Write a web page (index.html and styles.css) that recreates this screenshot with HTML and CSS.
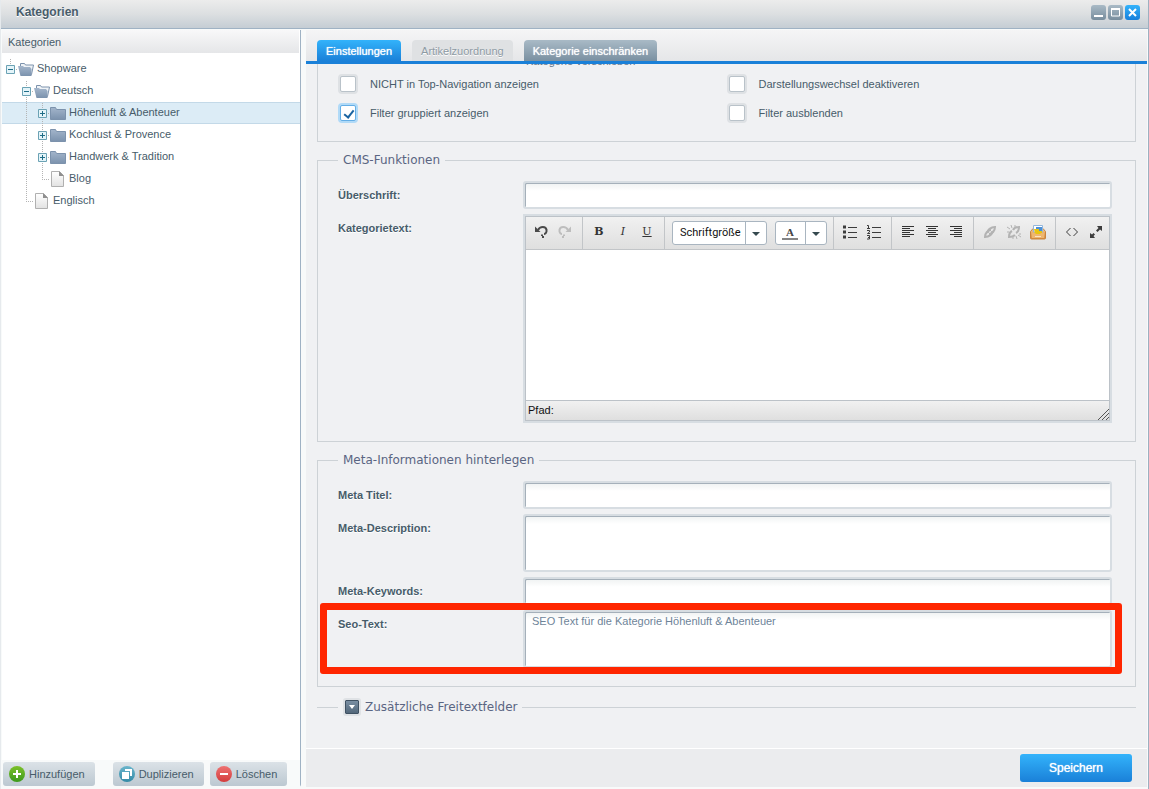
FILE: index.html
```html
<!DOCTYPE html>
<html lang="de">
<head>
<meta charset="utf-8">
<title>Kategorien</title>
<link rel="stylesheet" href="styles.css">
</head>
<body>
<svg class="defs" aria-hidden="true">
  <defs>
    <linearGradient id="g-folder" x1="0" y1="0" x2="0" y2="1"><stop offset="0" stop-color="#a3b5cb"/><stop offset="1" stop-color="#7b92ad"/></linearGradient>
    <linearGradient id="g-page" x1="0" y1="0" x2="0" y2="1"><stop offset="0" stop-color="#fff"/><stop offset="1" stop-color="#e2e2e2"/></linearGradient>
    <linearGradient id="g-green" x1="0" y1="0" x2="0" y2="1"><stop offset="0" stop-color="#7cc02a"/><stop offset="1" stop-color="#3c9a1c"/></linearGradient>
    <linearGradient id="g-teal" x1="0" y1="0" x2="0" y2="1"><stop offset="0" stop-color="#6ab5cc"/><stop offset="1" stop-color="#338aa6"/></linearGradient>
    <linearGradient id="g-red" x1="0" y1="0" x2="0" y2="1"><stop offset="0" stop-color="#ee7272"/><stop offset="1" stop-color="#d33c3c"/></linearGradient>
    <linearGradient id="g-tray" x1="0" y1="0" x2="0" y2="1"><stop offset="0" stop-color="#f3c78c"/><stop offset="1" stop-color="#d98b3c"/></linearGradient>
    <symbol id="folder" viewBox="0 0 16 22"><path d="M.5 5.500h5l1 2h9v10H.5z" fill="url(#g-folder)" stroke="#7c92ac"/></symbol>
    <symbol id="folder-open" viewBox="0 0 16 22"><path d="M2.500 8V5.500h4l1 1.500h8l-2 9.500h-2" fill="#eef2f6" stroke="#7c92ac"/><path d="M0 8h5l1 1h6l1.500 2V18H2.500z" fill="url(#g-folder)"/></symbol>
    <symbol id="page" viewBox="0 0 16 22"><path d="M1.500 3.500h8l4 4v11h-12z" fill="url(#g-page)" stroke="#b0b0b0"/><path d="M9 3l5 5H9z" fill="#8f8f8f"/></symbol>
    <symbol id="box-top" viewBox="0 0 16 22"><path d="M8.500 1v6M14 11.500h2" class="dots"/><path d="M4.500 7.500h8v8h-8z" class="ebox"/><path d="M6 11.500h5" class="esign"/></symbol>
    <symbol id="box-minus" viewBox="0 0 16 22"><path d="M8.500 1v6M8.500 17v5M14 11.500h2" class="dots"/><path d="M4.500 7.500h8v8h-8z" class="ebox"/><path d="M6 11.500h5" class="esign"/></symbol>
    <symbol id="box-plus" viewBox="0 0 16 22"><path d="M8.500 1v6M8.500 17v5M14 11.500h2" class="dots"/><path d="M4.500 7.500h8v8h-8z" class="ebox"/><path d="M6 11.500h5M8.500 9v5" class="esign"/></symbol>
    <symbol id="line" viewBox="0 0 16 22"><path d="M8.500 1v22" class="dots"/></symbol>
    <symbol id="elbow" viewBox="0 0 16 22"><path d="M8.500 1v10M8 11.500h8" class="dots"/></symbol>
    <symbol id="blank" viewBox="0 0 16 22"></symbol>
  </defs>
</svg>

<div class="window">
  <header class="titlebar">
    <h1>Kategorien</h1>
    <div class="tools">
      <button class="tool" aria-label="Minimieren"><svg width="15" height="15"><path d="M3 11h9" stroke="#fff" stroke-width="2"/></svg></button>
      <button class="tool" aria-label="Maximieren"><svg width="15" height="15"><path d="M3.500 4v7h8V4" fill="none" stroke="#fff"/><path d="M3 4h9" stroke="#fff" stroke-width="2"/></svg></button>
      <button class="tool close" aria-label="Schließen"><svg width="15" height="15"><path d="M4 4l7 7M11 4l-7 7" stroke="#fff" stroke-width="2"/></svg></button>
    </div>
  </header>

  <div class="body">
    <aside class="sidebar">
      <h2>Kategorien</h2>
      <ul class="tree">
        <li><svg><use href="#box-top"/></svg><svg><use href="#folder-open"/></svg><span>Shopware</span></li>
        <li><svg><use href="#blank"/></svg><svg><use href="#box-minus"/></svg><svg><use href="#folder-open"/></svg><span>Deutsch</span></li>
        <li class="selected"><svg><use href="#blank"/></svg><svg><use href="#line"/></svg><svg><use href="#box-plus"/></svg><svg><use href="#folder"/></svg><span>Höhenluft &amp; Abenteuer</span></li>
        <li><svg><use href="#blank"/></svg><svg><use href="#line"/></svg><svg><use href="#box-plus"/></svg><svg><use href="#folder"/></svg><span>Kochlust &amp; Provence</span></li>
        <li><svg><use href="#blank"/></svg><svg><use href="#line"/></svg><svg><use href="#box-plus"/></svg><svg><use href="#folder"/></svg><span>Handwerk &amp; Tradition</span></li>
        <li><svg><use href="#blank"/></svg><svg><use href="#line"/></svg><svg><use href="#elbow"/></svg><svg><use href="#page"/></svg><span>Blog</span></li>
        <li><svg><use href="#blank"/></svg><svg><use href="#elbow"/></svg><svg><use href="#page"/></svg><span>Englisch</span></li>
      </ul>
      <div class="actions">
        <button class="action add"><svg width="16" height="16"><circle cx="8" cy="8" r="8" fill="url(#g-green)"/><path d="M8 4v8M4 8h8" stroke="#fff" stroke-width="2"/></svg>Hinzufügen</button>
        <button class="action"><svg width="16" height="16"><circle cx="8" cy="8" r="8" fill="url(#g-teal)"/><path d="M6 3h7v7h-2V5H6z" fill="#fff"/><path d="M3 6h7v7H3z" fill="#fff"/></svg>Duplizieren</button>
        <button class="action"><svg width="16" height="16"><circle cx="8" cy="8" r="8" fill="url(#g-red)"/><path d="M4 8h8" stroke="#fff" stroke-width="2"/></svg>Löschen</button>
      </div>
    </aside>

    <main class="main">
      <nav class="tabs">
        <button class="tab active">Einstellungen</button>
        <button class="tab disabled">Artikelzuordnung</button>
        <button class="tab">Kategorie einschränken</button>
      </nav>

      <form class="content">
        <fieldset class="options">
          <p class="hint">Kategorie verschieben</p>
          <div class="checks">
            <label><input type="checkbox">NICHT in Top-Navigation anzeigen</label>
            <label><input type="checkbox">Darstellungswechsel deaktiveren</label>
            <label><input type="checkbox" checked>Filter gruppiert anzeigen</label>
            <label><input type="checkbox">Filter ausblenden</label>
          </div>
        </fieldset>

        <fieldset class="group">
          <legend>CMS-Funktionen</legend>
          <div class="row"><label for="headline">Überschrift:</label><input class="field" id="headline" type="text"></div>
          <div class="row">
            <label for="text">Kategorietext:</label>
            <div class="editor">
              <div class="toolbar">
                <div class="set first">
                  <button type="button" aria-label="Rückgängig"><svg width="16" height="16" fill="none" stroke="#4a4a4a" stroke-width="2"><path d="M5 6c2-4 8-4 8.500 0 .3 2-.7 4-2.500 4"/><path d="M9 10.500v1.500M9 13h2" /><path d="M2 2.500V8h5.500z" fill="#4a4a4a" stroke="none"/></svg></button>
                  <button type="button" aria-label="Wiederholen"><svg width="16" height="16" fill="none" stroke="#bdbdbd" stroke-width="2"><path d="M11 6c-2-4-8-4-8.500 0-.3 2 .7 4 2.500 4"/><path d="M7 10.500v1.500M5 13h2"/><path d="M14 2.500V8H8.500z" fill="#bdbdbd" stroke="none"/></svg></button>
                </div>
                <div class="set">
                  <button type="button" class="glyph" aria-label="Fett"><b>B</b></button>
                  <button type="button" class="glyph" aria-label="Kursiv"><i>I</i></button>
                  <button type="button" class="glyph" aria-label="Unterstrichen"><u>U</u></button>
                </div>
                <div class="set combos">
                  <div class="combo">
                    <select aria-label="Schriftgröße"><option>Schriftgröße</option></select>
                    <svg width="21" height="22"><path d="M.5 0v22" stroke="#a9b5c0"/><path d="M7 10h8l-4 4z" fill="#36494f"/></svg>
                  </div>
                  <button type="button" class="combo color" aria-label="Textfarbe">
                    <span>A</span>
                    <svg width="21" height="22"><path d="M.5 0v22" stroke="#a9b5c0"/><path d="M7 10h8l-4 4z" fill="#36494f"/></svg>
                  </button>
                </div>
                <div class="set">
                  <button type="button" aria-label="Aufzählung"><svg width="16" height="16" stroke="#3c3c3c"><path d="M6 3.500h9M6 8.500h9M6 13.500h9"/><path d="M1 3h3M1 8h3M1 13h3" stroke-width="3"/></svg></button>
                  <button type="button" aria-label="Nummerierung"><svg width="16" height="16" fill="none" stroke="#3c3c3c"><path d="M6 3.500h9M6 8.500h9M6 13.500h9"/><path d="M1 1.500h1.500V4M1 4.500h3M1 6.500h2.500v1.500L1.500 9.500H4M1 11.500h2.500v3.500H1M2 13.500h2"/></svg></button>
                </div>
                <div class="set">
                  <button type="button" aria-label="Linksbündig"><svg width="16" height="16" stroke="#333"><path d="M2 2.500h12M2 4.500h8M2 6.500h12M2 8.500h8M2 10.500h12M2 12.500h8"/></svg></button>
                  <button type="button" aria-label="Zentriert"><svg width="16" height="16" stroke="#333"><path d="M2 2.500h12M4 4.500h8M2 6.500h12M4 8.500h8M2 10.500h12M4 12.500h8"/></svg></button>
                  <button type="button" aria-label="Rechtsbündig"><svg width="16" height="16" stroke="#333"><path d="M2 2.500h12M6 4.500h8M2 6.500h12M6 8.500h8M2 10.500h12M6 12.500h8"/></svg></button>
                </div>
                <div class="set">
                  <button type="button" aria-label="Link einfügen"><svg width="16" height="16" fill="none" stroke="#b3b3b3" stroke-width="2"><path d="M6 9c-1-3 3-6 7-6 0 4-3 7-6 7"/><path d="M10 7c1 3-3 6-7 6 0-4 3-7 6-7"/></svg></button>
                  <button type="button" aria-label="Link entfernen"><svg width="16" height="16" fill="none" stroke="#b3b3b3" stroke-width="2"><path d="M7 6c1-2 3-3 6-3 0 2-1 5-3 6M9 11c-1 1-3 2-6 2 0-3 1-5 3-6"/><path d="M1 3l3 2M5 1l1 3M9 1v2M15 13l-3-2M11 15l-1-3M1 8h2M13 10h2M7 15v-2" stroke-width="1"/></svg></button>
                  <button type="button" aria-label="Medien"><svg width="16" height="16"><path d="M.5 14V7.500L3 4.500h10l2.500 3V14q0 1-1 1h-13q-1 0-1-1z" fill="url(#g-tray)" stroke="#c8853f"/><path d="M3.500 1.500h9V8h-9z" fill="#fff" stroke="#93b6dc"/><path d="M6 3h6v4H6z" fill="#4d90d6"/><path d="M4 5h5v2h3v3H5z" fill="#e8c410"/><path d="M2 9h3l1 1h4l1-1h3v5H2z" fill="#eeb66f"/><path d="M5 12.500h6" stroke="#fbe3c0"/></svg></button>
                </div>
                <div class="set last">
                  <button type="button" aria-label="Quelltext"><svg width="16" height="16" fill="none" stroke="#3c3c3c"><path d="M6.500 4L2.500 8l4 4M9.500 4l4 4-4 4"/></svg></button>
                  <button type="button" aria-label="Vollbild"><svg width="16" height="16" fill="#3c3c3c"><path d="M9 2h5v5l-2-1.500-2.500 2.500-1.500-1.500L10.500 4zM7 14H2V9l2 1.500L5.500 9 7 10.500 5.500 12z"/></svg></button>
                </div>
              </div>
              <textarea id="text"></textarea>
              <div class="status"><span>Pfad:</span><svg width="11" height="11" stroke="#555"><path d="M0 11L11 0M4 11l7-7M8 11l3-3"/></svg></div>
            </div>
          </div>
        </fieldset>

        <fieldset class="group">
          <legend>Meta-Informationen hinterlegen</legend>
          <div class="row"><label for="mtitle">Meta Titel:</label><input class="field" id="mtitle" type="text"></div>
          <div class="row"><label for="mdesc">Meta-Description:</label><textarea class="field area" id="mdesc"></textarea></div>
          <div class="row"><label for="mkeys">Meta-Keywords:</label><input class="field" id="mkeys" type="text"></div>
          <div class="row marked"><label for="seo">Seo-Text:</label><textarea class="field area" id="seo">SEO Text für die Kategorie Höhenluft &amp; Abenteuer</textarea></div>
        </fieldset>

        <fieldset class="group collapsed">
          <legend><button type="button" class="toggle" aria-label="Aufklappen"><svg width="12" height="12"><path d="M3 4h6L6 8z" fill="#fff"/></svg></button>Zusätzliche Freitextfelder</legend>
        </fieldset>
      </form>

      <footer class="footer"><button class="save">Speichern</button></footer>
    </main>
  </div>
</div>
</body>
</html>
```

FILE: styles.css
```css
* { box-sizing: border-box; }

body {
  margin: 0;
  font: 11px/14px "Liberation Sans", Arial, sans-serif;
  color: #475c6a;
  background: #f8fafa;
}

button, input, textarea, select { font: inherit; color: inherit; }
button { padding: 0; border: 0; background: none; }
svg { flex: none; display: block; }
.defs { position: absolute; width: 0; height: 0; }
.dots { stroke: #b4b4b4; stroke-dasharray: 1 1; fill: none; }
.ebox { fill: #e4f4f9; stroke: #6ba2b4; }
.esign { stroke: #1f6d87; }

.window {
  display: flex;
  flex-direction: column;
  height: 100vh;
  border-right: 1px solid #9db0c0;
  border-left: 1px solid #e6eaed;
}

.titlebar {
  flex: none;
  display: flex;
  align-items: center;
  justify-content: space-between;
  height: 29px;
  padding: 0 8px 4px 15px;
  background: linear-gradient(#ececec, #dcdfe1 50%, #c5cdd4);
  border-bottom: 1px solid #9fb2c4;
}
.titlebar h1 { margin: 0; font-size: 12px; line-height: 14px; text-shadow: 0 1px 0 #fff; }
.tools { display: flex; gap: 2px; }
.tool { width: 15px; height: 15px; border-radius: 3px; background: linear-gradient(#a9bac6, #778d9d); }
.tool.close { background: linear-gradient(#33b3fb, #167fdb); }

.body { flex: 1; display: flex; gap: 5px; min-height: 0; padding: 1px 1px 2px; }

.sidebar {
  flex: none;
  display: flex;
  flex-direction: column;
  width: 299px;
  background: #fff;
  border-right: 1px solid #9fb2c4;
  border-bottom-right-radius: 3px;
}
.sidebar h2 {
  margin: 0 1px 0 0;
  padding: 5px 6px 4px;
  font-size: 11px;
  font-weight: 400;
  line-height: 14px;
  background: linear-gradient(#f8f8f9, #e5e6e8);
}
.tree { flex: 1; margin: 0; padding: 5px 0; list-style: none; }
.tree li { display: flex; height: 22px; }
.tree svg { width: 16px; height: 22px; }
.tree span { padding: 3px; line-height: 14px; }
.tree .selected { background: #dcecf6; box-shadow: inset 0 1px #c3d9e8, inset 0 -1px #c3d9e8; }

.actions { display: flex; gap: 6px; padding: 2px 1px 1px; background: #f8fafa; }
.action {
  display: flex;
  align-items: center;
  gap: 4px;
  height: 24px;
  padding: 0 10px 0 6px;
  border-radius: 3px;
  background: linear-gradient(#dbe2e7, #bcc8d1);
}
.action.add { margin-right: 12px; }

.main { flex: 1; min-width: 0; display: flex; flex-direction: column; background: #f0f1f3; }
.tabs {
  flex: none;
  display: flex;
  align-items: flex-end;
  gap: 11px;
  height: 34px;
  padding: 0 11px;
  border-bottom: 3px solid #1a80d8;
  background: linear-gradient(#f5f5f6, #e5e6e8);
}
.tab {
  height: 21px;
  padding: 0 9px;
  border-radius: 4px 4px 0 0;
  color: #fff;
  font-weight: 400;
  text-shadow: 0 0 1px #fff;
  background: linear-gradient(#a9bac6, #7a90a1);
}
.tab.active { background: linear-gradient(#33b3fb, #1a80d8); }
.tab.disabled { color: #8d9aa3; background: #dfe1e3; text-shadow: 0 1px #fff; }

.content { flex: 1; min-height: 0; overflow: hidden; padding: 0 11px; }
fieldset { margin: 0; min-width: 0; border: 1px solid #cdd2d6; }
.options { padding: 0 20px 18px; border-top: 0; }
.hint { margin: -9px 0 0 188px; line-height: 12px; color: #61768b; }
.checks { display: grid; grid-template-columns: 1fr 1fr; row-gap: 9px; padding-top: 7px; }
.checks label { display: flex; align-items: center; gap: 12px; height: 20px; }
.checks input {
  appearance: none;
  width: 16px;
  height: 16px;
  margin: 2px;
  border: 1px solid #b9c2c9;
  border-radius: 2px;
  background: #fff;
  box-shadow: 0 0 0 2px #dee1e4;
}
.checks input:checked {
  border-color: #64aee6;
  box-shadow: 0 0 0 2px #b1daf7;
}
.checks input:checked::before {
  content: "";
  display: block;
  width: 4px;
  height: 8px;
  margin: 2px 0 0 5px;
  border: solid #1a63a0;
  border-width: 0 2px 2px 0;
  transform: rotate(38deg);
}

.group { margin-top: 10px; padding: 13px 23px 18px 20px; }
.group legend {
  margin: 0;
  padding: 0 5px;
  font: 12px/16px "DejaVu Sans", Verdana, sans-serif;
  color: #5a6582;
}
.row { position: relative; display: flex; }
.row + .row { margin-top: 5px; }
.row > label { flex: none; width: 185px; padding-top: 7px; font-weight: 700; text-shadow: 0 1px #fff; }
.field {
  flex: 1;
  min-width: 0;
  height: 28px;
  padding: 2px 7px;
  border: 2px solid #d7dde2;
  border-radius: 3px;
  background: linear-gradient(#eff2f2, #fff 8px);
  box-shadow: inset 1px 1px #a5b0ba;
  color: #6e8499;
}
.area { height: 58px; resize: none; overflow: hidden; }

.marked::after {
  content: "";
  position: absolute;
  inset: -7px -10px -6px -18px;
  border: 7px solid #ff2600;
  border-radius: 3px;
  pointer-events: none;
}

.editor { flex: 1; min-width: 0; border: 1px solid #bcc2c8; margin: 2px; box-shadow: 0 0 0 2px #d7dde2; }
.toolbar { display: flex; height: 33px; background: linear-gradient(#f1f1f1, #dfdfdf); border-bottom: 1px solid #c2c5c8; }
.set { display: flex; align-items: center; padding: 0 5px 2px 4px; border-right: 1px solid #c2c5c8; }
.set.first { padding-left: 3px; }
.set.last { border-right: 0; padding-right: 0; }
.set button { display: flex; align-items: center; justify-content: center; width: 24px; height: 24px; }
.set .glyph { font-family: "DejaVu Serif", "Liberation Serif", serif; font-size: 11px; color: #333; }
.set.combos { gap: 8px; padding: 0 6px 0 7px; }
.combo {
  position: relative;
  height: 24px;
  width: 95px;
  border: 1px solid #a9b5c0;
  border-radius: 3px;
  background: #fff;
}
.combo select {
  appearance: none;
  width: 100%;
  height: 22px;
  padding: 0 22px 0 7px;
  border: 0;
  background: none;
  color: #111;
  font-family: Roboto, Tahoma, sans-serif;
}
.combo svg { position: absolute; right: 0; top: 0; pointer-events: none; }
.set .color { width: 52px; justify-content: flex-start; border: 1px solid #a9b5c0; background: #fff; }
.color span {
  width: 16px;
  margin: 0 0 0 6px;
  border-bottom: 2px solid #858585;
  font: 700 11px/12px "Liberation Serif", serif;
  color: #444;
}
.editor textarea { display: block; width: 100%; height: 150px; border: 0; resize: none; background: #fff; }
.status {
  display: flex;
  justify-content: space-between;
  align-items: flex-end;
  height: 20px;
  padding-left: 2px;
  border-top: 1px solid #bcc2c8;
  color: #111;
  background: linear-gradient(#f1f1f1, #dfdfdf);
}
.status span { padding-bottom: 3px; }

.group.collapsed { padding: 0; border-width: 1px 0 0; }
.collapsed legend { display: flex; align-items: center; gap: 4px; margin-left: 21px; line-height: 20px; }
.toggle {
  width: 14px;
  height: 14px;
  margin: 2px;
  border: 1px solid #3f5162;
  border-radius: 1px;
  background: linear-gradient(#7a8fa3, #52677a);
  box-shadow: 0 0 0 2px #dfe2e5;
}

.footer {
  flex: none;
  display: flex;
  justify-content: flex-end;
  height: 39px;
  padding: 5px 15px;
  border-top: 1px solid #fff;
  background: #ebecee;
}
.save {
  width: 112px;
  height: 28px;
  border-radius: 3px;
  color: #fff;
  font-size: 12px;
  text-shadow: 0 0 1px #fff;
  background: linear-gradient(#33b3fb, #1a80d8);
}
```
